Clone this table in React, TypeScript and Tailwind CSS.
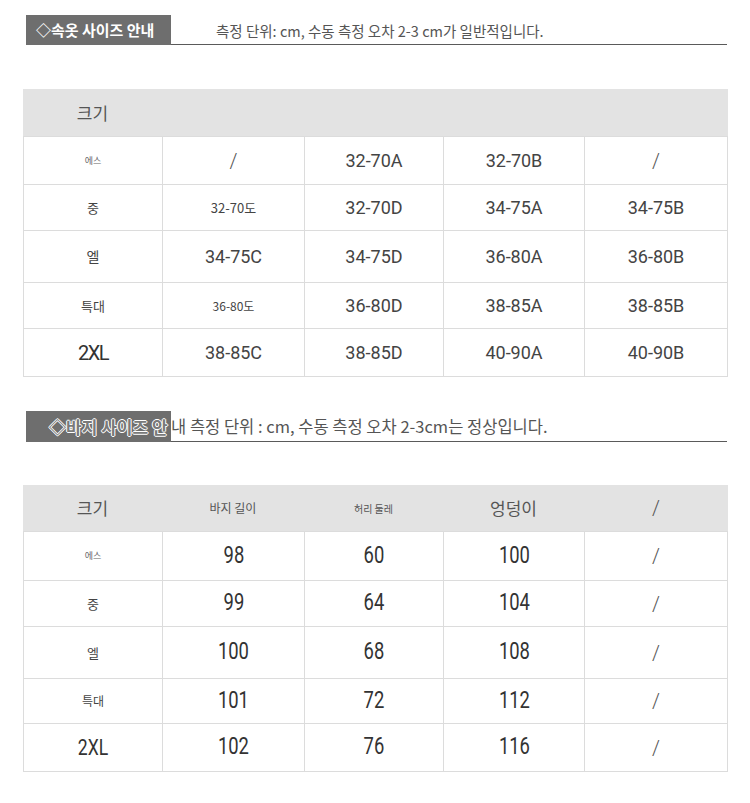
const border = "border-[#dcdcdc]";

type Cell = { text: string; cls: string; squeeze?: boolean };

const t = (text: string, cls: string, squeeze?: boolean): Cell => ({ text, cls, squeeze });

const big = "text-[18px] font-['Roboto','Noto_Sans_CJK_KR',sans-serif] text-[#444]";
const slash = "text-[20px] font-['Roboto',sans-serif] font-light text-[#555]";
const small = "text-[13px] font-['Noto_Sans_CJK_KR',sans-serif] text-[#444]";
const tiny = "text-[9px] font-['Noto_Sans_CJK_KR',sans-serif] text-[#666]";
const narrow = "text-[23px] font-['Roboto',sans-serif] text-[#333]";

const braRows: { h: string; cells: Cell[] }[] = [
  {
    h: "h-[48px]",
    cells: [t("에스", tiny), t("/", slash), t("32-70A", big), t("32-70B", big), t("/", slash)],
  },
  {
    h: "h-[46px]",
    cells: [t("중", small), t("32-70도", small), t("32-70D", big), t("34-75A", big), t("34-75B", big)],
  },
  {
    h: "h-[52px]",
    cells: [
      t("엘", "text-[14px] font-['Noto_Sans_CJK_KR',sans-serif] text-[#444]"),
      t("34-75C", big),
      t("34-75D", big),
      t("36-80A", big),
      t("36-80B", big),
    ],
  },
  {
    h: "h-[46px]",
    cells: [
      t("특대", small),
      t("36-80도", "text-[12px] font-['Noto_Sans_CJK_KR',sans-serif] text-[#444]"),
      t("36-80D", big),
      t("38-85A", big),
      t("38-85B", big),
    ],
  },
  {
    h: "h-[48px]",
    cells: [
      t("2XL", "text-[20px] font-['Roboto',sans-serif] text-[#333] tracking-[-1.5px]"),
      t("38-85C", big),
      t("38-85D", big),
      t("40-90A", big),
      t("40-90B", big),
    ],
  },
];

const pantsRows: { h: string; cells: Cell[] }[] = [
  { h: "h-[49px]", cells: [t("에스", tiny), t("98", narrow, true), t("60", narrow, true), t("100", narrow, true), t("/", slash)] },
  { h: "h-[46px]", cells: [t("중", small), t("99", narrow, true), t("64", narrow, true), t("104", narrow, true), t("/", slash)] },
  { h: "h-[52px]", cells: [t("엘", small), t("100", narrow, true), t("68", narrow, true), t("108", narrow, true), t("/", slash)] },
  {
    h: "h-[45px]",
    cells: [
      t("특대", "text-[12px] font-['Noto_Sans_CJK_KR',sans-serif] text-[#444]"),
      t("101", narrow, true),
      t("72", narrow, true),
      t("112", narrow, true),
      t("/", slash),
    ],
  },
  {
    h: "h-[48px]",
    cells: [
      t("2XL", "text-[22px] font-['Roboto',sans-serif] text-[#333]", true),
      t("102", narrow, true),
      t("76", narrow, true),
      t("116", narrow, true),
      t("/", slash),
    ],
  },
];

function Row({ h, cells, header }: { h: string; cells: Cell[]; header?: boolean }) {
  return (
    <div
      className={`grid grid-cols-[139px_142px_139px_141px_144px] ${h} border-b ${border} ${
        header ? "bg-[#e3e3e3]" : "bg-white"
      }`}
    >
      {cells.map((c, i) => (
        <div
          className={`flex items-center justify-center ${header ? "" : `border-l ${border}`} ${
            !header && i === cells.length - 1 ? `border-r ${border}` : ""
          } ${c.cls}`}
          key={i}
        >
          {c.squeeze ? <span className="inline-block scale-x-[0.8]">{c.text}</span> : c.text}
        </div>
      ))}
    </div>
  );
}

const headKo = "text-[17px] font-['Noto_Sans_CJK_KR',sans-serif] text-[#555]";

export default function App() {
  return (
    <div className="min-h-[803px] w-[750px] bg-white pl-[23px] pr-[22px] pt-[15px]">
      {/* 속옷 */}
      <div className="ml-[3px] mr-[1px] flex items-end">
        <div className="flex h-[30px] w-[145px] shrink-0 items-center bg-[#6e6e6e] pl-[10px] font-['Noto_Sans_CJK_KR',sans-serif] text-[15px] font-bold text-white whitespace-nowrap">
          ◇속옷 사이즈 안내
        </div>
        <div className="flex h-[30px] flex-1 items-center border-b-[1.5px] border-[#5a5a5a] pl-[45px] pt-[2px] font-['Noto_Sans_CJK_KR',sans-serif] text-[14.5px] text-[#555] whitespace-nowrap">
          측정 단위: cm, 수동 측정 오차 2-3 cm가 일반적입니다.
        </div>
      </div>

      <div className="mt-[44px]">
        <Row h="h-[48px]" header cells={[t("크기", headKo), t("", ""), t("", ""), t("", ""), t("", "")]} />
        {braRows.map((r, i) => (
          <Row key={i} h={r.h} cells={r.cells} />
        ))}
      </div>

      {/* 바지 */}
      <div className="ml-[3px] mr-[1px] mt-[34px] flex items-end">
        <div className="flex h-[31px] w-[145px] shrink-0 items-center bg-[#6e6e6e] pl-[23px] font-['Noto_Sans_CJK_KR',sans-serif] text-[17px] font-bold text-[#7a7a7a] [text-shadow:1px_0_#fff,-1px_0_#fff,0_1px_#fff,0_-1px_#fff] whitespace-nowrap overflow-hidden">
          ◇바지 사이즈 안
        </div>
        <div className="flex h-[31px] flex-1 items-center border-b-[1.5px] border-[#5a5a5a] font-['Noto_Sans_CJK_KR',sans-serif] text-[16.5px] text-[#555] whitespace-nowrap">
          내 측정 단위 : cm, 수동 측정 오차 2-3cm는 정상입니다.
        </div>
      </div>

      <div className="mt-[43px]">
        <Row
          h="h-[47px]"
          header
          cells={[
            t("크기", headKo),
            t("바지 길이", "text-[12px] font-['Noto_Sans_CJK_KR',sans-serif] text-[#555]"),
            t("허리 둘레", "text-[10px] font-['Noto_Sans_CJK_KR',sans-serif] text-[#555]"),
            t("엉덩이", "text-[17px] font-['Noto_Sans_CJK_KR',sans-serif] text-[#555]"),
            t("/", slash),
          ]}
        />
        {pantsRows.map((r, i) => (
          <Row key={i} h={r.h} cells={r.cells} />
        ))}
      </div>
    </div>
  );
}
